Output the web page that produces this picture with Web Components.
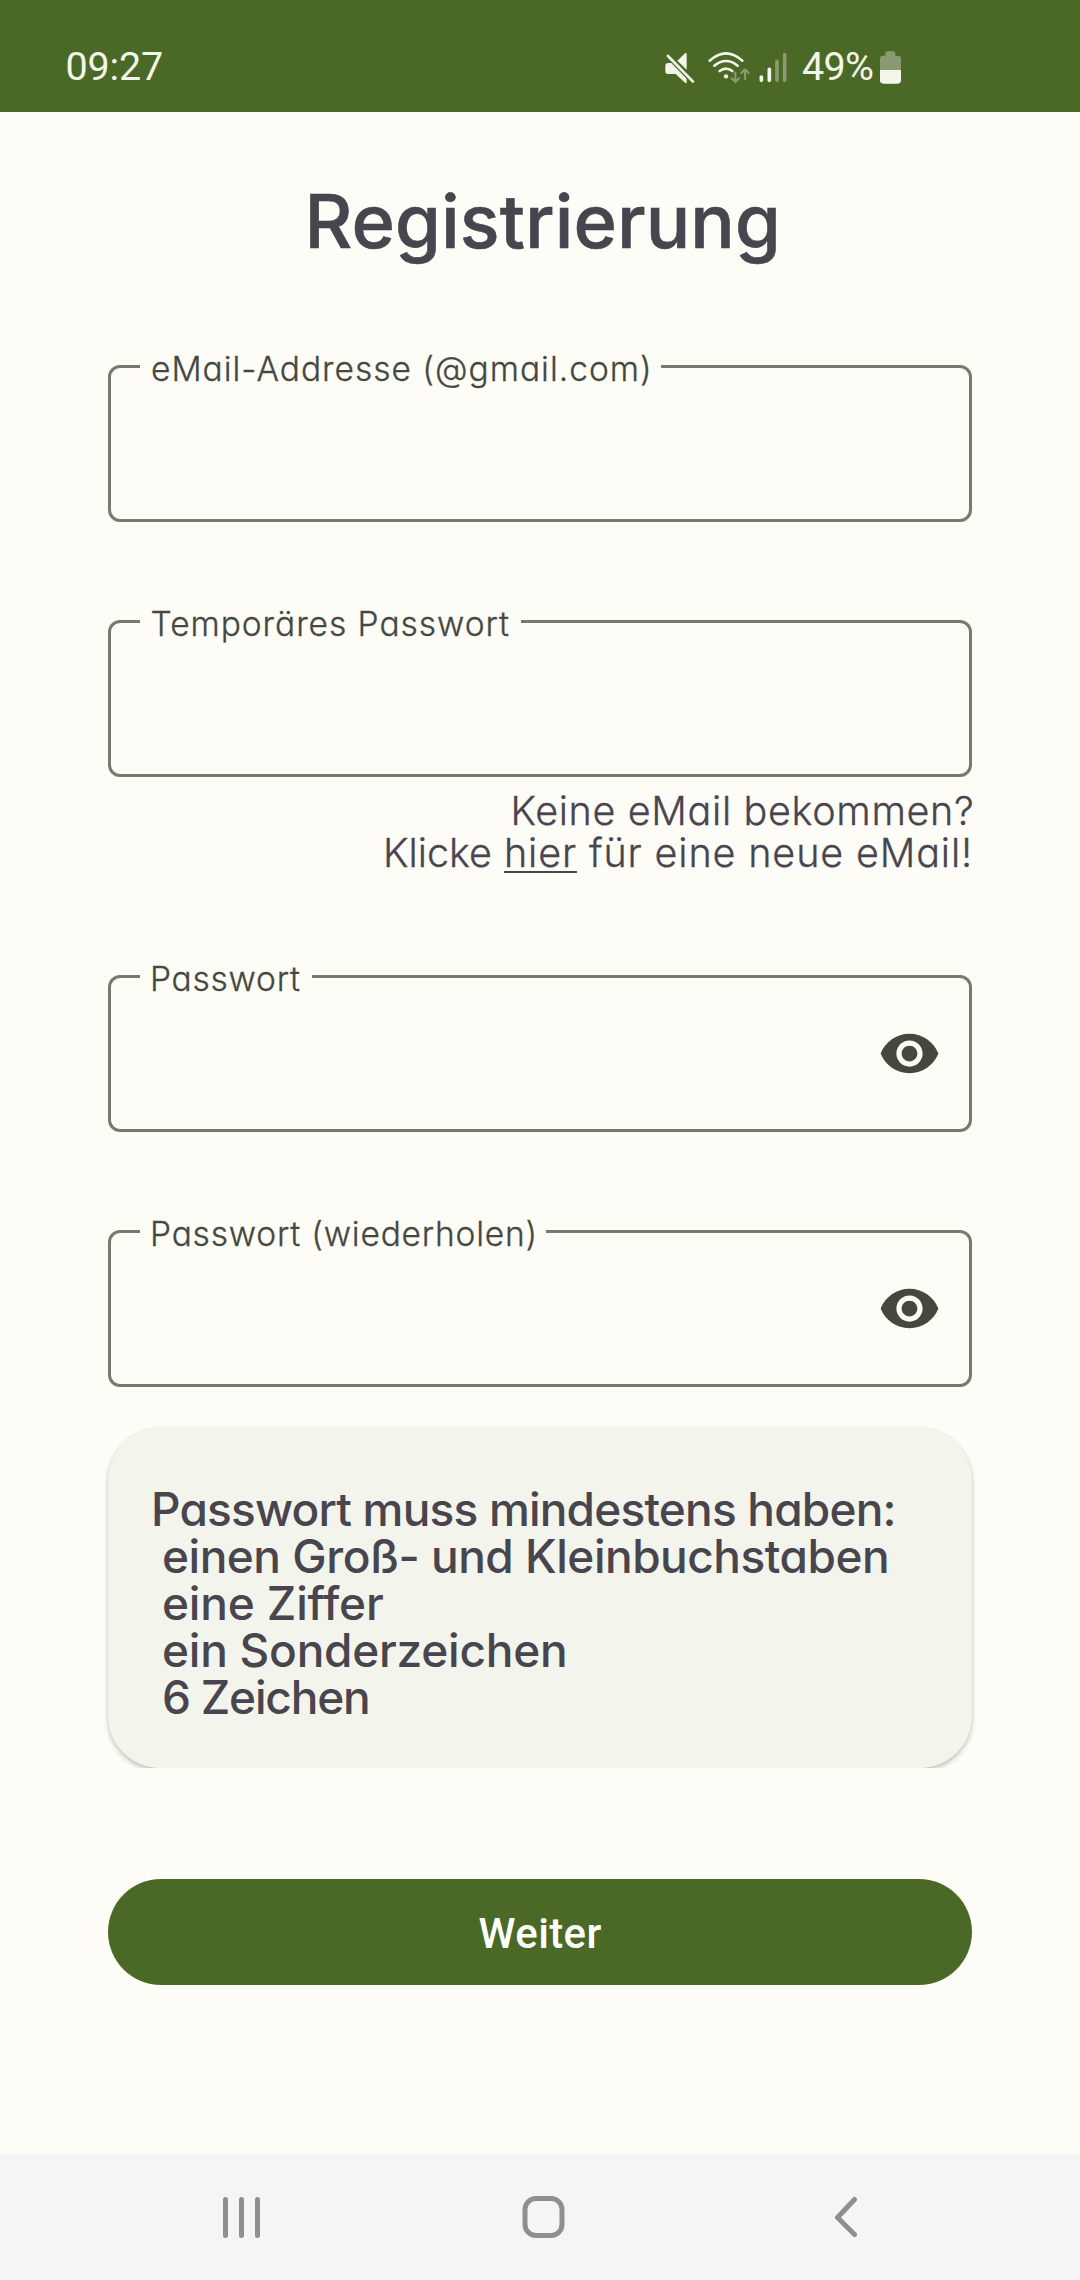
<!DOCTYPE html>
<html lang="de">
<head>
<meta charset="utf-8">
<title>Registrierung</title>
<style>
html,body{margin:0;padding:0;background:#fdfcf6}
body{width:1080px;height:2280px;overflow:hidden;font-family:Inter,"Open Sans",sans-serif;font-feature-settings:"cv11" 1;font-variant-ligatures:none;color:#48454e}
</style>
</head>
<body>
<register-screen>
  <status-bar slot="status"></status-bar>
  <page-title><fit-line start="309.5" end="776">Registrierung</fit-line></page-title>
  <outlined-field style="margin-top:99px;--notch:521px"><fit-line slot="label" start="152" end="648" origin="140">eMail-Addresse (@gmail.com)</fit-line></outlined-field>
  <outlined-field style="margin-top:98px;--notch:381px"><fit-line slot="label" start="151.5" end="509" origin="140">Temporäres Passwort</fit-line></outlined-field>
  <resend-hint>
    <fit-line start="513.5" end="972">Keine eMail bekommen?</fit-line>
    <fit-line start="386" end="969"><span>Klicke</span> <u>hier</u> für eine neue eMail!</fit-line>
  </resend-hint>
  <outlined-field toggle style="margin-top:103px;--notch:172px"><fit-line slot="label" start="153" end="300" origin="140">Passwort</fit-line></outlined-field>
  <outlined-field toggle style="margin-top:98px;--notch:406px"><fit-line slot="label" start="153" end="533.5" origin="140">Passwort (wiederholen)</fit-line></outlined-field>
  <rules-card>
    <fit-line start="154" end="893.5">Passwort muss mindestens haben:</fit-line>
    <fit-line start="164" end="887">einen Groß- und Kleinbuchstaben</fit-line>
    <fit-line start="164" end="383">eine Ziffer</fit-line>
    <fit-line start="164" end="565">ein Sonderzeichen</fit-line>
    <fit-line start="164" end="368">6 Zeichen</fit-line>
  </rules-card>
  <pill-button><fit-line start="478.5" end="601.5">Weiter</fit-line></pill-button>
  <nav-bar slot="nav"></nav-bar>
</register-screen>
<script>
function define(name, html) {
  const t = document.createElement('template');
  t.innerHTML = html;
  customElements.define(name, class extends HTMLElement {
    constructor() {
      super();
      this.attachShadow({ mode: 'open' }).append(t.content.cloneNode(true));
    }
  });
}

define('register-screen', `
<style>
:host{display:flex;flex-direction:column;width:1080px;height:2280px;background:#fdfcf6}
main{flex:1;display:flex;flex-direction:column;padding:61px 108px 0}
</style>
<slot name="status"></slot><main><slot></slot></main><slot name="nav"></slot>`);

define('status-bar', `
<style>
:host{display:flex;box-sizing:border-box;height:112px;background:#4b6926;color:#f3f5ea;font:400 39.5px/48px Roboto,sans-serif;padding:43px 179px 0 0;justify-content:space-between;font-feature-settings:normal}
.right{display:flex}
svg{display:block}
</style>
<fit-line start="67.5" end="162" origin="0">09:27</fit-line>
<div class="right">
<svg width="137" height="48" viewBox="72 39 411 144" fill="none" stroke-linecap="round" stroke-linejoin="round">
  <path d="M76 108q0-9 9-9h15l40 44v17l-4-1-29-27H84q-8 0-8-8z" fill="#f3f5ea"/>
  <path d="M112 92l24-23q4-1 4 3v47z" fill="#f3f5ea"/>
  <path d="M84 78l75 77" stroke="#4b6926" stroke-width="15"/>
  <path d="M84 78l75 77" stroke="#f3f5ea" stroke-width="8"/>
  <g stroke="#f3f5ea" stroke-width="8"><path d="M209 92q49-44 98 0M223 107q35-28 70 0M239 123q19-14 38 0"/></g>
  <circle cx="258" cy="139" r="6.500" fill="#f3f5ea"/>
  <path d="M286 128v27m-11-10 11 11 11-11M315 148v-28m-11 9 11-11 11 11" stroke="#899a70" stroke-width="6.500"/>
  <g stroke-width="11"><path d="M364 141v10M388 118v33" stroke="#f3f5ea"/><path d="M411 94v57M434 74v77" stroke="#899a70"/></g>
</svg>
<fit-line style="width:76px" start="803" end="873" origin="801">49%</fit-line>
<svg style="margin-left:3px" width="21" height="48" viewBox="720 39 63 144">
  <path d="M720 120V87q0-10 9-10h7v-7q0-6 6-6h18q6 0 6 6v7h7q10 0 10 10v33z" fill="#899a70"/>
  <path d="M720 120h63v31q0 10-10 10h-43q-10 0-10-10z" fill="#f3f5ea"/>
</svg>
</div>`);

define('page-title', `
<style>:host{display:block;height:93px;font-size:74px;line-height:96px;font-weight:500;-webkit-text-stroke:.6px}</style>
<slot></slot>`);

/* The box is 157px high; the label straddles its top border, reaching 19px above it. */
define('outlined-field', `
<style>
:host{display:flow-root;height:157px;color:#45483f}
fieldset{box-sizing:border-box;height:176px;margin:-19px 0 0;min-width:0;padding:0 28px 0 29px;border:3px solid #767b6e;border-radius:12px}
legend{box-sizing:border-box;width:var(--notch);height:41px;padding:3px 0 0;font-size:33.500px;line-height:40px;font-weight:300;-webkit-text-stroke:.3px;white-space:nowrap}
svg{display:none}
:host([toggle]) svg{display:block;margin:25px 0 0 auto}
</style>
<fieldset><legend><slot name="label"></slot></legend>
<svg width="63" height="63" viewBox="0 0 24 24"><path fill="#45483f" d="M12 4.500C7 4.500 2.730 7.610 1 12c1.730 4.390 6 7.500 11 7.500s9.270-3.110 11-7.500c-1.730-4.390-6-7.500-11-7.500zM12 17c-2.760 0-5-2.240-5-5s2.240-5 5-5 5 2.240 5 5-2.240 5-5 5zm0-8c-1.660 0-3 1.340-3 3s1.340 3 3 3 3-1.340 3-3-1.340-3-3-3z"/></svg>
</fieldset>`);

define('resend-hint', `
<style>
:host{display:block;box-sizing:border-box;height:86px;padding-top:2px;margin:11px 0 -2px;font-size:39.500px;line-height:42px;font-weight:300;-webkit-text-stroke:.3px}
</style>
<slot></slot>`);

define('rules-card', `
<style>
:host{display:block;margin-top:41px;clip-path:inset(-8px -8px 0)}
section{box-sizing:border-box;height:340px;padding-top:58px;border-radius:52px;background:#f3f4eb;box-shadow:0 3px 5px rgba(0,0,0,.22),0 0 2px rgba(0,0,0,.08);font-size:46px;line-height:47px;font-weight:500}
</style>
<section><slot></slot></section>`);

define('pill-button', `
<style>
:host{display:block;height:106px;margin-top:111px;border-radius:53px;background:#4b6926;color:#fff;font:500 42px/109px Roboto,sans-serif;font-feature-settings:normal}
</style>
<slot></slot>`);

define('nav-bar', `
<style>
:host{display:flex;box-sizing:border-box;height:126px;background:#f5f5f5;padding:42px 0 0 221.500px}
svg{display:block;fill:none;stroke:#8f8f8f;stroke-width:5;stroke-linecap:round;stroke-linejoin:round}
</style>
<svg width="40" height="44"><path d="M3.500 3.500v36M19.500 3.500v36M35.500 3.500v36"/></svg>
<svg width="44" height="44" style="margin-left:259px"><rect x="4" y="2.500" width="37" height="37" rx="11"/></svg>
<svg width="26" height="44" style="margin-left:269.500px"><path d="M20.500 3.500 3.500 21.500l17 17"/></svg>`);

/* One line of text whose ink runs from start to end (page units);
   origin is the page x of the container's content edge.
   Text inside a <span> child keeps its own tight spacing. */
customElements.define('fit-line', class extends HTMLElement {
  constructor() {
    super();
    this.attachShadow({ mode: 'open' }).innerHTML = `
<style>
:host{display:block;white-space:nowrap}
::slotted(span){letter-spacing:0}
::slotted(u){text-decoration-thickness:2px;text-underline-offset:4px;text-decoration-skip-ink:none}
</style><span><slot></slot></span>`;
  }
  fit() {
    const text = this.textContent, span = this.shadowRoot.querySelector('span');
    const start = +this.getAttribute('start'), end = +this.getAttribute('end');
    const origin = +(this.getAttribute('origin') ?? 108);
    const fixed = this.querySelector('span')?.textContent.length ?? 0;
    const cs = getComputedStyle(this), ctx = document.createElement('canvas').getContext('2d');
    ctx.font = `${cs.fontWeight} ${cs.fontSize} ${cs.fontFamily}`;
    const m = ctx.measureText(text);
    const left = -m.actualBoundingBoxLeft, right = m.width - m.actualBoundingBoxRight;
    const ink = span.getBoundingClientRect().width - left - right;
    span.style.letterSpacing = (end - start - ink) / (text.length - 1 - fixed) + 'px';
    span.style.marginLeft = start - origin - left + 'px';
  }
  connectedCallback() { this.fit(); }
});
</script>
</body>
</html>
